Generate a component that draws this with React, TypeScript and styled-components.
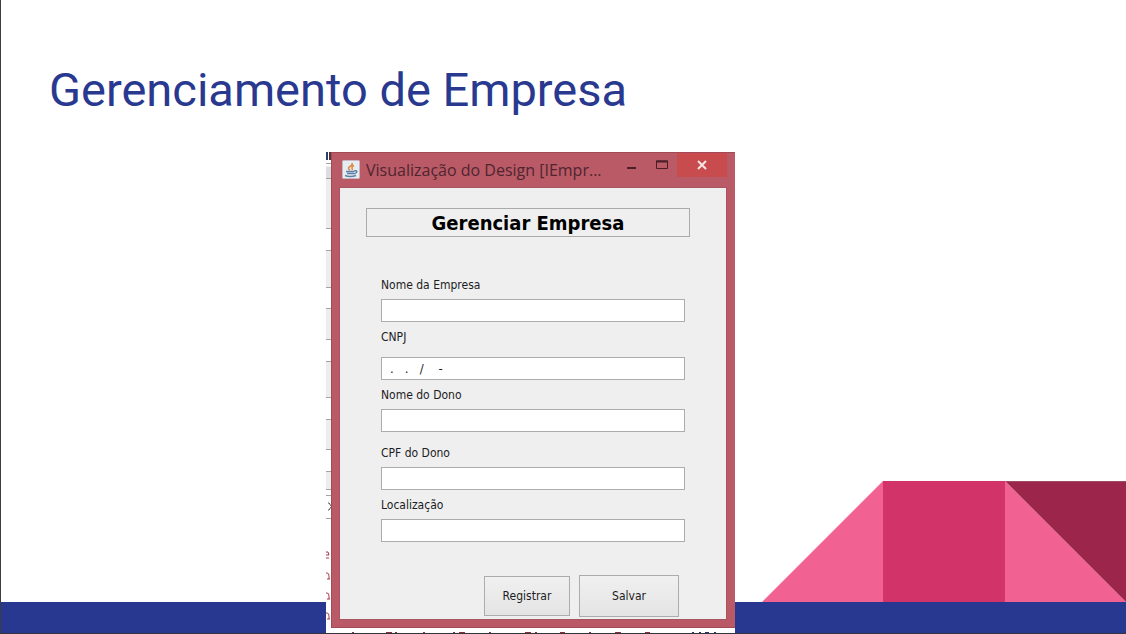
import React from "react";
import styled, { createGlobalStyle } from "styled-components";

const Global = createGlobalStyle`
  * { box-sizing: border-box; }
  body { margin: 0; background: #fff; }
`;

const Slide = styled.main`
  position: relative;
  isolation: isolate;
  min-height: 100vh;
  overflow: hidden;
  background: #fff;
  border-left: 1px solid #3c3c44;
  border-bottom: 1px solid #34343c;
`;

const SlideTitle = styled.h1`
  margin: 0;
  padding: 62px 48px 34px;
  font: 400 47px/56px Roboto, sans-serif;
  color: #2a3990;
`;

const Decoration = styled.div`
  position: absolute;
  z-index: -1;
  left: 0;
  right: 0;
  bottom: 0;
  display: flex;
  flex-direction: column;
  align-items: flex-end;
`;

const Band = styled.div`
  width: 100%;
  height: 31px;
  background: #283890;
`;

const Shapes = styled.svg`
  display: block;
`;

const Capture = styled.section`
  display: flex;
  width: 409px;
  margin-left: 325px;
  background: #fff;
`;

const Edge = styled.svg`
  display: block;
  flex: none;
`;

const WindowColumn = styled.div`
  flex: 1;
  display: flex;
  flex-direction: column;
  justify-content: space-between;
`;

const Dialog = styled.form`
  border: 1px solid #a34a58;
  border-right: 0;
  padding: 0 8px 7px 7px;
  background: #b95a66;
`;

const TitleBar = styled.header`
  display: flex;
  align-items: flex-start;
  height: 34px;
  padding-left: 3px;
`;

const JavaIcon = styled.svg`
  flex: none;
  margin-top: 7px;
`;

const WindowTitle = styled.div`
  flex: 1;
  padding-left: 6px;
  font: 400 16px/34px "Open Sans", sans-serif;
  color: #4f2530;
  white-space: nowrap;
`;

const WindowButton = styled.button<{ $close?: boolean }>`
  display: grid;
  place-items: center;
  width: ${(p) => (p.$close ? 50 : 31)}px;
  height: 24px;
  padding: 0;
  border: 0;
  background: ${(p) => (p.$close ? "#c84c4e" : "transparent")};
`;

const Panel = styled.div`
  display: flex;
  flex-direction: column;
  height: 433px;
  padding: 20px 36px 2px 26px;
  background: #efefef;
  border: 1px solid #a85561;
`;

const Heading = styled.h2`
  margin: 0 0 33px;
  padding-top: 1px;
  border: 1px solid #aaa;
  font: 700 20px/26px "DejaVu Sans Condensed", "DejaVu Sans", sans-serif;
  text-align: center;
  color: #000;
`;

const Field = styled.div<{ $spaceAbove?: boolean; $spaceInside?: boolean }>`
  display: flex;
  flex-direction: column;
  gap: ${(p) => (p.$spaceInside ? 12 : 6)}px;
  padding: ${(p) => (p.$spaceAbove ? 13 : 7)}px 5px 0 15px;
`;

const Label = styled.label`
  font: 400 12px/16px "DejaVu Sans Condensed", "DejaVu Sans", sans-serif;
  color: #1c1c24;
`;

const TextInput = styled.input`
  width: 100%;
  height: 23px;
  padding: 0 8px;
  border: 1px solid #acacac;
  background: #fff;
  font: 400 13px/20px "DejaVu Sans Condensed", "DejaVu Sans", sans-serif;
  color: #1c1c24;
  white-space: pre;
`;

const Actions = styled.div`
  display: flex;
  justify-content: flex-end;
  align-items: center;
  gap: 9px;
  margin-top: auto;
  padding-right: 11px;
`;

const ActionButton = styled.button<{ $large?: boolean }>`
  width: ${(p) => (p.$large ? 100 : 86)}px;
  height: ${(p) => (p.$large ? 42 : 40)}px;
  padding: 0;
  border: 1px solid #acacac;
  background: linear-gradient(#f0f0f0, #e4e4e4);
  font: 400 12px/16px "DejaVu Sans Condensed", "DejaVu Sans", sans-serif;
  color: #1c1c24;
`;

const fields = [
  { id: "empresa", label: "Nome da Empresa" },
  { id: "cnpj", label: "CNPJ", inside: true, value: ".   .   /    -" },
  { id: "dono", label: "Nome do Dono" },
  { id: "cpf", label: "CPF do Dono", above: true },
  { id: "local", label: "Localização" },
];

const edgeLines = [11, 26, 76, 98, 135, 156, 187, 209, 245, 267, 297, 319, 337, 343, 366];
const edgeLetters = [403, 424, 444, 464];

export default function App() {
  return (
    <>
      <Global />
      <Slide>
        <SlideTitle>Gerenciamento de Empresa</SlideTitle>
        <Decoration aria-hidden="true">
          <Shapes width="364" height="121" viewBox="0 0 364 121">
            <path d="M0 121 121 0V121zM243 0 364 121H243z" fill="#f16292" />
            <path d="M121 0H243V121H121z" fill="#d23369" />
            <path d="M243 0H364V121z" fill="#9b254b" />
            <path d="M244 .5H364" stroke="#a04a68" />
          </Shapes>
          <Band />
        </Decoration>
        <Capture>
          <Edge width="5" height="481" viewBox="0 0 5 481" aria-hidden="true">
            <path d="M0 14H5V76H0zM0 98H5V135H0zM0 156H5V187H0zM0 209H5V245H0zM0 267H5V297H0zM0 319H5V337H0z" fill="#ededed" />
            <path d="M0 15H5V26H0z" fill="#dcdce2" />
            <path d="M0 0H2V8H0z" fill="#24446c" />
            <path d="M3 0H5V8H3z" fill="#5b3138" />
            {edgeLines.map((y) => (
              <path key={y} d={`M0 ${y}.5H5`} stroke="#a4a4a4" />
            ))}
            <path d="M2 351H3L5 354M5 355 3 358H2" stroke="#555" fill="none" />
            {edgeLetters.map((y, i) => (
              <path
                key={y}
                d={i === 0 ? `M0 ${y - 3}H2L3 ${y}H0M0 ${y + 3}H3` : `M0 ${y - 3}H1Q3 ${y - 3} 3 ${y}V${y + 3}M1 ${y + 3}H4`}
                stroke="#a83c48"
                fill="none"
              />
            ))}
          </Edge>
          <WindowColumn>
            <Dialog onSubmit={(e: React.FormEvent) => e.preventDefault()}>
              <TitleBar>
                <JavaIcon width="18" height="19" viewBox="0 0 18 19" aria-hidden="true">
                  <rect x="0.5" y="0.5" width="17" height="18" rx="1" fill="#e6edf2" stroke="#c9b6be" />
                  <path d="M10 3Q11 5 8 6.500T8 10M12 5.500Q9 6.500 10.500 10" stroke="#e08a45" strokeWidth="1.6" fill="none" />
                  <path d="M4 11.500H12M5 13.500H12M3 15.500Q8 17.500 14 15.500M12 11Q16 10 14.500 12.500L12 14" stroke="#5d81a5" strokeWidth="1.4" fill="none" />
                </JavaIcon>
                <WindowTitle>Visualização do Design [IEmpr...</WindowTitle>
                <WindowButton type="button" aria-label="Minimizar">
                  <svg width="10" height="10"><path d="M1 8H10" stroke="#4b1f28" strokeWidth="2" /></svg>
                </WindowButton>
                <WindowButton type="button" aria-label="Maximizar">
                  <svg width="12" height="10"><path d="M.5 1H11.5V8.5H.5z" stroke="#4b1f28" fill="none" /><path d="M0 1.500H12" stroke="#4b1f28" strokeWidth="2" /></svg>
                </WindowButton>
                <WindowButton type="button" $close aria-label="Fechar">
                  <svg width="10" height="10"><path d="M1 1 9 9M9 1 1 9" stroke="#f8e4e4" strokeWidth="2" /></svg>
                </WindowButton>
              </TitleBar>
              <Panel>
                <Heading>Gerenciar Empresa</Heading>
                {fields.map((f) => (
                  <Field key={f.id} $spaceAbove={f.above} $spaceInside={f.inside}>
                    <Label htmlFor={f.id}>{f.label}</Label>
                    <TextInput id={f.id} type="text" defaultValue={f.value} />
                  </Field>
                ))}
                <Actions>
                  <ActionButton type="submit">Registrar</ActionButton>
                  <ActionButton type="button" $large>Salvar</ActionButton>
                </Actions>
              </Panel>
            </Dialog>
            <Edge width="404" height="2" viewBox="0 0 404 2" aria-hidden="true">
              <path
                d="M21 1.500H23M55 1.500H61M64 1.500H66M92 1.500H94M122 1.500H124M128 1.500H134M158 1.500H160M194 1.500H200M204 1.500H206M229 1.500H234M258 1.500H260M284 1.500H290M314 1.500H319"
                stroke="#8c3038"
              />
              <path d="M361 1.500H363M368 1.500H370M374 1.500H378M383 1.500H385" stroke="#2c2c78" />
            </Edge>
          </WindowColumn>
        </Capture>
      </Slide>
    </>
  );
}
